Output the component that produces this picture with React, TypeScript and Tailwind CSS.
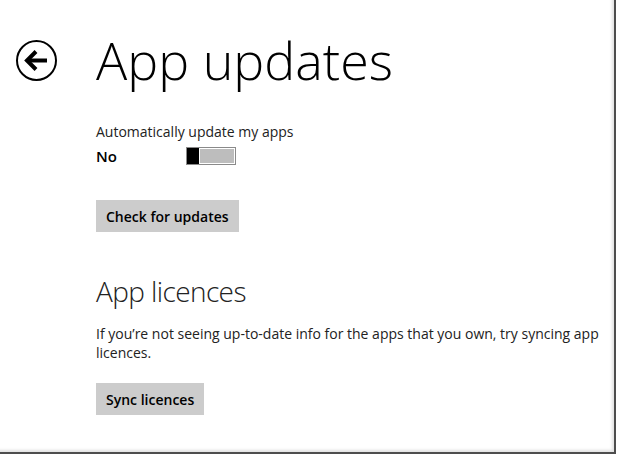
const font = { fontFamily: '"Open Sans", "Noto Sans", sans-serif' };

const BackIcon = () => (
  <svg width="41" height="41" viewBox="0 0 41 41" fill="none">
    <circle cx="20.5" cy="20.5" r="19.5" stroke="black" strokeWidth="2" />
    <path d="M11 20.5H31" stroke="black" strokeWidth="4" />
    <path d="M20 11.5L11 20.5L20 29.5" stroke="black" strokeWidth="4" strokeLinejoin="miter" />
  </svg>
);

const Toggle = ({ on }: { on: boolean }) => (
  <div className="flex h-[18px] w-[50px] border border-[#8a8a8a] bg-white">
    {!on && <div className="w-[12px] bg-black" />}
    <div className="m-px flex-1 bg-[#bdbdbd]" />
    {on && <div className="w-[12px] bg-black" />}
  </div>
);

export default function App() {
  return (
    <div className="h-[456px] w-[619px] bg-white" style={font}>
      {/* screenshot frame */}
      <div className="h-[454px] w-[616px] border-r-2 border-b-2 border-[#4d4d4d] shadow-[inset_-3px_-3px_3px_-1px_rgba(0,0,0,0.12)]">
        <div className="grid grid-cols-[96px_1fr] pt-[34px]">
          <div className="pl-4 pt-[6px]">
            <button className="block">
              <BackIcon />
            </button>
          </div>
          <h1 className="text-[52px] font-light leading-[52px] text-black">App updates</h1>

          <div />
          <div className="pt-[36px]">
            <p className="text-[14px] leading-5 text-[#222]">Automatically update my apps</p>
            <div className="mt-[4px] flex items-center">
              <span className="w-[90px] text-[15px] font-semibold leading-5 text-black">No</span>
              <Toggle on={false} />
            </div>

            <button className="mt-[34px] h-[32px] bg-[#cccccc] px-[10px] text-[14px] font-semibold text-black">
              Check for updates
            </button>

            <h2 className="mt-[41px] text-[28px] font-light leading-9 tracking-[-0.6px] text-[#222]">App licences</h2>
            <p className="mt-[15px] w-[510px] text-[14px] leading-[19px] text-[#222]">
              If you’re not seeing up-to-date info for the apps that you own, try syncing app licences.
            </p>
            <button className="mt-[21px] h-[32px] bg-[#cccccc] px-[10px] text-[14px] font-semibold text-black">
              Sync licences
            </button>
          </div>
        </div>
      </div>
    </div>
  );
}
